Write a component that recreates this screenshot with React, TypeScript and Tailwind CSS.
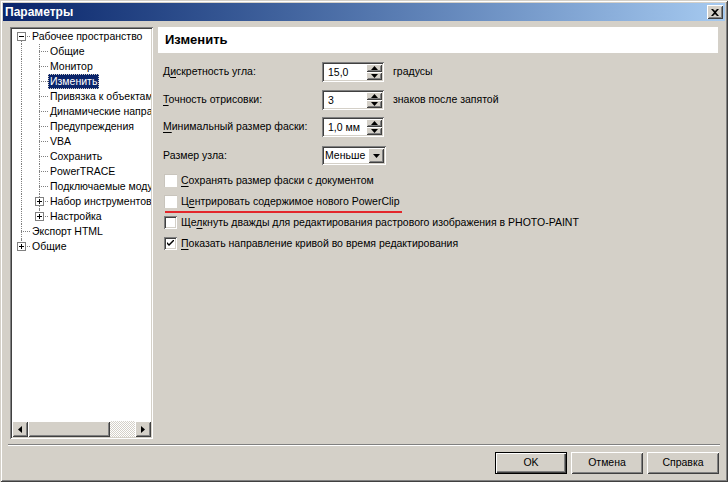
import React from 'react';

interface TreeRow {
    label: string;
    depth: number;
    expander?: '+' | '-';
    last?: boolean;
    first?: boolean;
    selected?: boolean;
    guides: boolean[];
}

const treeRows: TreeRow[] = [
    { label: 'Рабочее пространство', depth: 0, expander: '-', first: true, guides: [] },
    { label: 'Общие', depth: 1, guides: [true] },
    { label: 'Монитор', depth: 1, guides: [true] },
    { label: 'Изменить', depth: 1, guides: [true], selected: true },
    { label: 'Привязка к объектам', depth: 1, guides: [true] },
    { label: 'Динамические направляющие', depth: 1, guides: [true] },
    { label: 'Предупреждения', depth: 1, guides: [true] },
    { label: 'VBA', depth: 1, guides: [true] },
    { label: 'Сохранить', depth: 1, guides: [true] },
    { label: 'PowerTRACE', depth: 1, guides: [true] },
    { label: 'Подключаемые модули', depth: 1, guides: [true] },
    { label: 'Набор инструментов', depth: 1, expander: '+', guides: [true] },
    { label: 'Настройка', depth: 1, expander: '+', last: true, guides: [true] },
    { label: 'Экспорт HTML', depth: 0, guides: [] },
    { label: 'Общие', depth: 0, expander: '+', last: true, guides: [] },
];

const raised =
    'shadow-[inset_1px_1px_0_#ffffff,inset_-1px_-1px_0_#404040,inset_2px_2px_0_#d4d0c8,inset_-2px_-2px_0_#808080]';
const sunken =
    'shadow-[inset_1px_1px_0_#808080,inset_-1px_-1px_0_#ffffff,inset_2px_2px_0_#404040,inset_-2px_-2px_0_#d4d0c8]';

const Accel: React.FC<{ text: string; at: number }> = ({ text, at }) => (
    <span>
        {text.slice(0, at)}
        <span className="underline underline-offset-2">{text[at]}</span>
        {text.slice(at + 1)}
    </span>
);

const Expander: React.FC<{ kind: '+' | '-' }> = ({ kind }) => (
    <div className="absolute left-[5px] top-[3px] w-[9px] h-[9px] border border-[#808080] bg-white flex items-center justify-center">
        <div className="relative w-[5px] h-[5px] flex items-center justify-center">
            <div className="absolute w-[5px] h-px bg-black" />
            {kind === '+' && <div className="absolute w-px h-[5px] bg-black" />}
        </div>
    </div>
);

const Tree: React.FC = () => (
    <div className={`w-[143px] h-[412px] bg-white p-[2px] flex flex-col ${sunken}`}>
        <div className="flex-1 overflow-hidden">
            {treeRows.map((row, i) => (
                <div key={i} className="flex h-[15px] items-stretch whitespace-nowrap">
                    {row.guides.map((g, j) => (
                        <div key={j} className="relative w-[18px] shrink-0">
                            {g && <div className="absolute left-[9px] top-0 bottom-0 border-l border-dotted border-[#808080]" />}
                        </div>
                    ))}
                    <div className="relative w-[18px] shrink-0">
                        <div
                            className={`absolute left-[9px] border-l border-dotted border-[#808080] ${
                                row.first ? 'top-[7px]' : 'top-0'
                            } ${row.last ? 'h-[8px]' : 'bottom-0'}`}
                        />
                        <div className="absolute left-[9px] right-0 top-[7px] border-t border-dotted border-[#808080]" />
                        {row.expander && <Expander kind={row.expander} />}
                    </div>
                    <div
                        className={`px-[2px] leading-[15px] ${
                            row.selected ? 'bg-[#0a246a] text-white outline outline-1 outline-dotted outline-[#d4d0c8] -outline-offset-1' : 'text-black'
                        }`}
                    >
                        {row.label}
                    </div>
                </div>
            ))}
        </div>
        <div className="flex h-[16px] shrink-0">
            <div className={`w-[16px] bg-[#d4d0c8] flex items-center justify-center ${raised}`}>
                <svg width="4" height="7" viewBox="0 0 4 7">
                    <path d="M4 0 L0 3.5 L4 7 Z" fill="#000" />
                </svg>
            </div>
            <div className={`w-[82px] bg-[#d4d0c8] ${raised}`} />
            <div className="flex-1 bg-[repeating-conic-gradient(#d4d0c8_0%_25%,#ffffff_0%_50%)] bg-[length:2px_2px]" />
            <div className={`w-[16px] bg-[#d4d0c8] flex items-center justify-center ${raised}`}>
                <svg width="4" height="7" viewBox="0 0 4 7">
                    <path d="M0 0 L4 3.5 L0 7 Z" fill="#000" />
                </svg>
            </div>
        </div>
    </div>
);

const Spin: React.FC<{ value: string }> = ({ value }) => (
    <div className={`w-[62px] h-[20px] bg-white flex p-[2px] ${sunken}`}>
        <div className="flex-1 pl-[4px] leading-[16px]">{value}</div>
        <div className="w-[16px] flex flex-col">
            <div className={`flex-1 bg-[#d4d0c8] flex items-center justify-center ${raised}`}>
                <svg width="7" height="4" viewBox="0 0 7 4">
                    <path d="M0 4 L3.5 0 L7 4 Z" fill="#000" />
                </svg>
            </div>
            <div className={`flex-1 bg-[#d4d0c8] flex items-center justify-center ${raised}`}>
                <svg width="7" height="4" viewBox="0 0 7 4">
                    <path d="M0 0 L3.5 4 L7 0 Z" fill="#000" />
                </svg>
            </div>
        </div>
    </div>
);

const Combo: React.FC<{ value: string }> = ({ value }) => (
    <div className={`w-[64px] h-[19px] bg-white flex p-[2px] ${sunken}`}>
        <div className="flex-1 pl-[1px] leading-[15px]">{value}</div>
        <div className={`w-[16px] bg-[#d4d0c8] flex items-center justify-center ${raised}`}>
            <svg width="7" height="4" viewBox="0 0 7 4">
                <path d="M0 0 L3.5 4 L7 0 Z" fill="#000" />
            </svg>
        </div>
    </div>
);

const Check: React.FC<{ checked?: boolean; flat?: boolean }> = ({ checked, flat }) => (
    <div
        className={`w-[13px] h-[13px] bg-white flex items-center justify-center shrink-0 ${
            flat
                ? 'shadow-[inset_1px_1px_0_#c8c4bc,inset_-1px_-1px_0_#ffffff]'
                : 'shadow-[inset_1px_1px_0_#808080,inset_-1px_-1px_0_#ffffff,inset_2px_2px_0_#404040,inset_-2px_-2px_0_#d4d0c8]'
        }`}
    >
        {checked && (
            <svg width="7" height="7" viewBox="0 0 7 7">
                <path d="M0 2 L0 4 L2 6 L7 1 L7 -1 L2 4 Z" fill="#000" />
            </svg>
        )}
    </div>
);

const Button: React.FC<{ label: string; isDefault?: boolean }> = ({ label, isDefault }) => (
    <div
        className={`w-[72px] h-[22px] bg-[#d4d0c8] flex items-center justify-center ${
            isDefault
                ? 'shadow-[inset_0_0_0_1px_#000000,inset_2px_2px_0_#ffffff,inset_-2px_-2px_0_#404040,inset_-3px_-3px_0_#808080]'
                : raised
        }`}
    >
        {label}
    </div>
);

const App: React.FC = () => {
    return (
        <div
            className="w-[728px] h-[482px] bg-[#d4d0c8] p-[3px] flex flex-col text-[10.5px] text-black shadow-[inset_1px_1px_0_#d4d0c8,inset_-1px_-1px_0_#404040,inset_2px_2px_0_#ffffff,inset_-2px_-2px_0_#808080]"
            style={{ fontFamily: '"Liberation Sans", Arial, sans-serif' }}
        >
            <div className="h-[18px] shrink-0 bg-gradient-to-r from-[#0a246a] to-[#a6caf0] flex items-center justify-between pl-[2px] pr-[2px]">
                <span className="text-white font-bold text-[12px]">Параметры</span>
                <div className={`w-[16px] h-[14px] bg-[#d4d0c8] flex items-center justify-center ${raised}`}>
                    <svg width="8" height="7" viewBox="0 0 8 7">
                        <path d="M0 0 H2 L4 2 L6 0 H8 L5 3.5 L8 7 H6 L4 5 L2 7 H0 L3 3.5 Z" fill="#000" />
                    </svg>
                </div>
            </div>

            <div className="flex gap-[5px] pl-[7px] pr-[5px] pt-[6px]">
                <Tree />
                <div className="flex-1 flex flex-col">
                    <div className="h-[26px] bg-white flex items-center pl-[7px] mr-[2px]">
                        <span className="font-bold text-[13px]">Изменить</span>
                    </div>
                    <div className="flex flex-col pl-[5px] pt-[9px]">
                        <div className="flex items-center h-[20px]">
                            <div className="w-[159px]">
                                <Accel text="Дискретность угла:" at={1} />
                            </div>
                            <Spin value="15,0" />
                            <span className="ml-[9px]">градусы</span>
                        </div>
                        <div className="flex items-center h-[20px] mt-[8px]">
                            <div className="w-[159px]">
                                <Accel text="Точность отрисовки:" at={0} />
                            </div>
                            <Spin value="3" />
                            <span className="ml-[9px]">знаков после запятой</span>
                        </div>
                        <div className="flex items-center h-[20px] mt-[7px]">
                            <div className="w-[159px]">
                                <Accel text="Минимальный размер фаски:" at={0} />
                            </div>
                            <Spin value="1,0 мм" />
                        </div>
                        <div className="flex items-center h-[19px] mt-[9px]">
                            <div className="w-[159px]">Размер узла:</div>
                            <Combo value="Меньше" />
                        </div>

                        <div className="flex flex-col mt-[5px] pl-[1px]">
                            <div className="flex items-center gap-[4px] h-[21px]">
                                <Check flat />
                                <Accel text="Сохранять размер фаски с документом" at={0} />
                            </div>
                            <div className="relative flex items-center gap-[4px] h-[21px]">
                                <Check flat />
                                <Accel text="Центрировать содержимое нового PowerClip" at={1} />
                                <div className="absolute left-[1px] bottom-[-1px] w-[237px] h-[2px] bg-[#e3262b]" />
                            </div>
                            <div className="flex items-center gap-[4px] h-[21px]">
                                <Check />
                                <Accel text="Щелкнуть дважды для редактирования растрового изображения в PHOTO-PAINT" at={2} />
                            </div>
                            <div className="flex items-center gap-[4px] h-[21px]">
                                <Check checked />
                                <Accel text="Показать направление кривой во время редактирования" at={0} />
                            </div>
                        </div>
                    </div>
                </div>
            </div>

            <div className="mx-[5px] mt-[5px] h-[2px] border-t border-[#808080] border-b border-b-white" />

            <div className="flex justify-end gap-[4px] pr-[6px] pt-[6px]">
                <Button label="OK" isDefault />
                <Button label="Отмена" />
                <Button label="Справка" />
            </div>
        </div>
    );
};

export default App;
